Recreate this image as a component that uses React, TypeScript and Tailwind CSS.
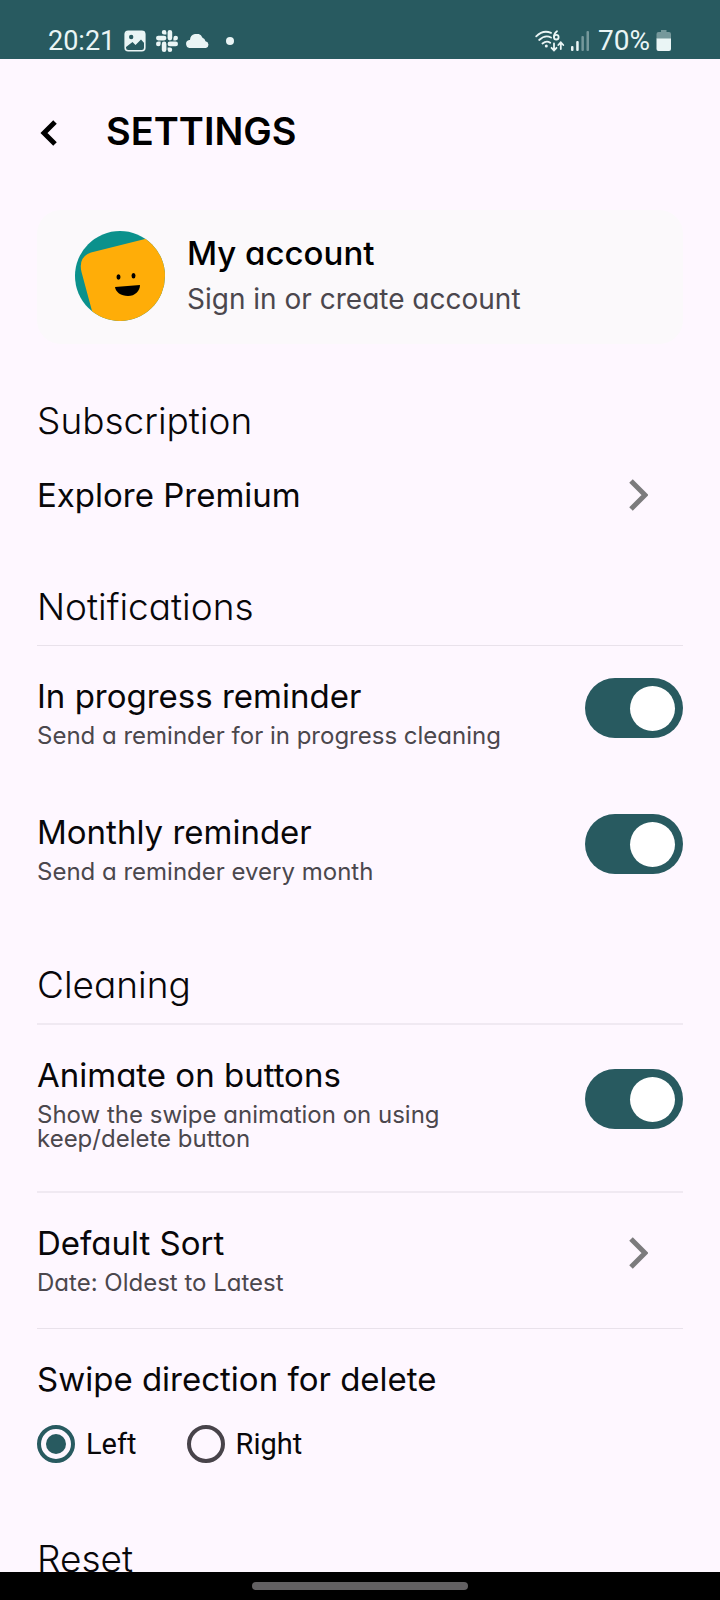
import React, { useState } from 'react';

const StatusBar = () => (
  <div className="flex h-[59px] shrink-0 items-end justify-between bg-[#285a60] pr-12 pb-[2px] pl-12 font-[Roboto,sans-serif] text-[#eaf5f5]">
    <div className="flex items-center">
      <span className="text-[27px] leading-8">20:21</span>
      {/* Gallery */}
      <svg className="ml-[9px] h-[22px] w-[22px]" viewBox="0 0 22 22">
        <rect x="1.2" y="1.2" width="19.6" height="19.6" rx="3" fill="none" stroke="currentColor" strokeWidth="1.6" />
        <path d="M3 1h16a2 2 0 0 1 2 2v11l-4-4.500-5.500 5.500-3-3L2 17V3z" fill="currentColor" />
        <circle cx="7.200" cy="7" r="2.200" fill="#285a60" />
      </svg>
      {/* Slack */}
      <svg className="ml-[10px] h-[22px] w-[22px]" viewBox="0 0 24 24" fill="currentColor">
        <path d="M5.042 15.165a2.528 2.528 0 0 1-2.520 2.523A2.528 2.528 0 0 1 0 15.165a2.527 2.527 0 0 1 2.522-2.520h2.520v2.520zM6.313 15.165a2.527 2.527 0 0 1 2.521-2.520 2.527 2.527 0 0 1 2.521 2.520v6.313A2.528 2.528 0 0 1 8.834 24a2.528 2.528 0 0 1-2.521-2.522v-6.313zM8.834 5.042a2.528 2.528 0 0 1-2.521-2.520A2.528 2.528 0 0 1 8.834 0a2.528 2.528 0 0 1 2.521 2.522v2.520H8.834zM8.834 6.313a2.528 2.528 0 0 1 2.521 2.521 2.528 2.528 0 0 1-2.521 2.521H2.522A2.528 2.528 0 0 1 0 8.834a2.528 2.528 0 0 1 2.522-2.521h6.312zM18.956 8.834a2.528 2.528 0 0 1 2.522-2.521A2.528 2.528 0 0 1 24 8.834a2.528 2.528 0 0 1-2.522 2.521h-2.522V8.834zM17.688 8.834a2.528 2.528 0 0 1-2.523 2.521 2.527 2.527 0 0 1-2.520-2.521V2.522A2.527 2.527 0 0 1 15.165 0a2.528 2.528 0 0 1 2.523 2.522v6.312zM15.165 18.956a2.528 2.528 0 0 1 2.523 2.522A2.528 2.528 0 0 1 15.165 24a2.527 2.527 0 0 1-2.520-2.522v-2.522h2.520zM15.165 17.688a2.527 2.527 0 0 1-2.520-2.523 2.526 2.526 0 0 1 2.520-2.520h6.313A2.527 2.527 0 0 1 24 15.165a2.528 2.528 0 0 1-2.522 2.523h-6.313z" />
      </svg>
      {/* Weather */}
      <svg className="ml-2 h-[14px] w-6" viewBox="0 0 24 14" fill="currentColor">
        <path d="M4.500 14a4 4 0 0 1-1.200-7.900H4A6.500 6.500 0 0 1 16.500 3.800a5 5 0 0 1 3 3.400A3.500 3.500 0 0 1 20 14z" />
      </svg>
      <span className="ml-4 h-2 w-2 rounded-full bg-current" />
    </div>
    <div className="flex items-center">
      <svg className="h-[22px] w-[30px]" viewBox="0 0 30 22" fill="none" stroke="currentColor" strokeWidth="1.8" strokeLinecap="round">
        <path d="M1.200 6.300Q8 -.500 16 2.800M4.200 10Q10 4.500 16 7.500M7.500 13.500Q11.500 10.200 15.200 12.700" />
        <circle cx="11.300" cy="16" r="1.500" fill="currentColor" stroke="none" />
        <path d="M22 1.200C20 2.500 19 4.500 19 7" />
        <circle cx="21.300" cy="7.200" r="2.300" />
        <path d="M19 13.500V20M16.500 17.800L19 20.500L21.500 17.800M25.800 19V12.500M23.300 15L25.800 12.300L28.300 15" />
      </svg>
      <svg className="ml-[6px] h-5 w-[18px]" viewBox="0 0 18 20" fill="currentColor">
        <rect x="0" y="15" width="2.500" height="5" rx="1" />
        <rect x="5.200" y="10" width="2.500" height="10" rx="1" />
        <rect x="10.400" y="5" width="2.500" height="15" rx="1" opacity=".4" />
        <rect x="15.500" y="0" width="2.500" height="20" rx="1" opacity=".4" />
      </svg>
      <span className="ml-[9px] text-[28px] leading-8">70%</span>
      <svg className="ml-[6px] h-[22px] w-4" viewBox="0 0 16 22" fill="currentColor">
        <path d="M5 0h5.500v2H13a2 2 0 0 1 2 2v5H.500V4a2 2 0 0 1 2-2H5z" opacity=".4" />
        <path d="M.500 8.500H15V19a2 2 0 0 1-2 2H2.500a2 2 0 0 1-2-2z" />
      </svg>
    </div>
  </div>
);

const Avatar = () => (
  <svg className="h-[90px] w-[90px] shrink-0" viewBox="0 0 90 90">
    <defs>
      <clipPath id="avatar">
        <circle cx="45" cy="45" r="45" />
      </clipPath>
    </defs>
    <g clipPath="url(#avatar)">
      <rect width="90" height="90" fill="#0b918c" />
      <path d="M17 80L6.500 41Q3 26 16 21.500L72 7.500L100 0V100H23z" fill="#ffad08" />
    </g>
    <ellipse cx="43.500" cy="46" rx="2" ry="2.700" />
    <ellipse cx="58.500" cy="44.700" rx="2" ry="2.700" />
    <path d="M40 56L65 54C65 60 60 65 53 65C46 65 40.500 61 40 56z" />
  </svg>
);

const Chevron = () => (
  <svg className="mr-[35px] h-8 w-[19px] shrink-0" viewBox="0 0 19 32" fill="none" stroke="#7c7b7d" strokeWidth="5">
    <path d="M2 2L16 16L2 30" />
  </svg>
);

const SectionTitle = ({ children }: { children: React.ReactNode }) => (
  <h2 className="text-[37px] leading-[50px] font-light">{children}</h2>
);

type RowTextProps = { title: string; description: string };

const RowText = ({ title, description }: RowTextProps) => (
  <span className="flex flex-col gap-2">
    <span className="text-[33px] leading-10">{title}</span>
    <span className="text-2xl leading-6 text-[#4b474d]">{description}</span>
  </span>
);

const SwitchRow = ({ title, description }: RowTextProps) => {
  const [enabled, setEnabled] = useState(true);

  return (
    <label className="flex items-center justify-between gap-16">
      <RowText title={title} description={description} />
      <input
        type="checkbox"
        role="switch"
        checked={enabled}
        onChange={() => setEnabled(!enabled)}
        className="mb-2 flex h-[60px] w-[98px] shrink-0 appearance-none items-center rounded-full bg-gray-400 px-2 before:h-[45px] before:w-[45px] before:rounded-full before:bg-white checked:justify-end checked:bg-[#285a60]"
      />
    </label>
  );
};

const App = () => {
  const [direction, setDirection] = useState('Left');

  return (
    <div className="flex h-screen flex-col bg-[#fef7ff] font-[Inter,sans-serif] text-[#080709] [font-feature-settings:'cv11']">
      <StatusBar />

      <main className="min-h-0 flex-1 overflow-y-auto px-[37px] [scrollbar-width:none]">
        {/* Header */}
        <header className="flex items-center pt-12">
          <button aria-label="Back" className="flex h-12 w-[69px] items-center pt-1 pl-[3px]">
            <svg className="h-[26px] w-[17px]" viewBox="0 0 17 26" fill="none" stroke="#000" strokeWidth="5">
              <path d="M15 2L4 13L15 24" />
            </svg>
          </button>
          <h1 className="text-[38px] leading-[48px] font-semibold text-black">SETTINGS</h1>
        </header>

        {/* Account */}
        <button className="mt-[55px] flex h-[134px] w-full items-center gap-[22px] rounded-3xl bg-[#fbf9fb] px-[38px] pb-[2px] text-left">
          <Avatar />
          <span className="flex flex-col gap-[6px]">
            <span className="text-[33px] leading-10 font-medium text-black">My account</span>
            <span className="text-[28px] leading-10 text-[#4b474d]">Sign in or create account</span>
          </span>
        </button>

        {/* Subscription */}
        <section className="pt-[52px]">
          <SectionTitle>Subscription</SectionTitle>
          <button className="mt-[29px] flex w-full items-center justify-between text-left">
            <span className="text-[33px] leading-10">Explore Premium</span>
            <Chevron />
          </button>
        </section>

        {/* Notifications */}
        <section className="pt-[67px]">
          <SectionTitle>Notifications</SectionTitle>
          <hr className="mt-[13px] mb-[30px] border-t border-[#e9e2eb]" />
          <div className="flex flex-col gap-16">
            <SwitchRow title="In progress reminder" description="Send a reminder for in progress cleaning" />
            <SwitchRow title="Monthly reminder" description="Send a reminder every month" />
          </div>
        </section>

        {/* Cleaning */}
        <section className="pt-[76px]">
          <SectionTitle>Cleaning</SectionTitle>
          <hr className="mt-[13px] mb-[30px] border-t-2 border-[#f0e9f2]" />
          <SwitchRow title="Animate on buttons" description="Show the swipe animation on using keep/delete button" />
          <hr className="mt-10 mb-[30px] border-t-2 border-[#f0e9f2]" />
          <button className="flex w-full items-center justify-between text-left">
            <RowText title="Default Sort" description="Date: Oldest to Latest" />
            <span className="pb-3">
              <Chevron />
            </span>
          </button>
          <hr className="mt-[33px] mb-[30px] border-t border-[#e9e2eb]" />
          <fieldset>
            <legend className="text-[33px] leading-10">Swipe direction for delete</legend>
            <div className="flex gap-[50px] pt-[26px]">
              {['Left', 'Right'].map((option) => (
                <label key={option} className="flex items-center gap-[11px] font-[Roboto,sans-serif] text-[29px] leading-[38px]">
                  <input
                    type="radio"
                    name="direction"
                    value={option}
                    checked={direction === option}
                    onChange={() => setDirection(option)}
                    className="flex h-[38px] w-[38px] appearance-none items-center justify-center rounded-full border-4 border-[#48434a] checked:border-[#285a60] checked:before:h-5 checked:before:w-5 checked:before:rounded-full checked:before:bg-[#285a60]"
                  />
                  {option}
                </label>
              ))}
            </div>
          </fieldset>
        </section>

        {/* Reset */}
        <section className="pt-[71px]">
          <SectionTitle>Reset</SectionTitle>
        </section>
      </main>

      {/* Gesture bar */}
      <div className="flex h-7 shrink-0 items-center justify-center bg-black">
        <div className="h-2 w-[30%] rounded-full bg-[#626062]" />
      </div>
    </div>
  );
};

export default App;
